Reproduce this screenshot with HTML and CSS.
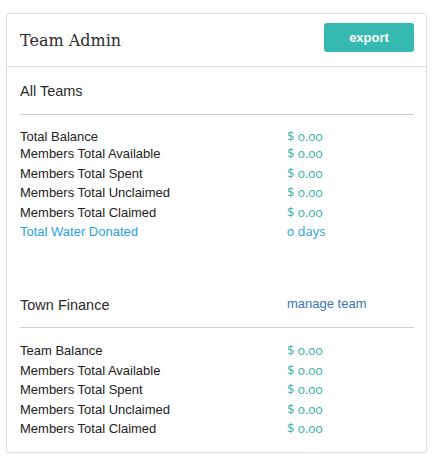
FILE: index.html
```html
<!DOCTYPE html>
<html>
<head>
<meta charset="utf-8">
<link rel="stylesheet" href="styles.css">
</head>
<body>
<div class="card">
  <div class="card-header">
    <h1 class="title">Team Admin</h1>
    <button class="btn-export">export</button>
  </div>
  <div class="card-body">
    <section class="team team-all">
      <div class="team-head">
        <span class="team-name">All Teams</span>
      </div>
      <div class="rows">
        <div class="row row-first"><span class="label">Total Balance</span><span class="value">$ 0.00</span></div>
        <div class="row"><span class="label">Members Total Available</span><span class="value">$ 0.00</span></div>
        <div class="row"><span class="label">Members Total Spent</span><span class="value">$ 0.00</span></div>
        <div class="row"><span class="label">Members Total Unclaimed</span><span class="value">$ 0.00</span></div>
        <div class="row"><span class="label">Members Total Claimed</span><span class="value">$ 0.00</span></div>
        <div class="row row-water"><span class="label">Total Water Donated</span><span class="value">0 days</span></div>
      </div>
    </section>
    <section class="team team-town">
      <div class="team-head">
        <span class="team-name">Town Finance</span>
        <a class="manage" href="#">manage team</a>
      </div>
      <div class="rows">
        <div class="row"><span class="label">Team Balance</span><span class="value">$ 0.00</span></div>
        <div class="row"><span class="label">Members Total Available</span><span class="value">$ 0.00</span></div>
        <div class="row"><span class="label">Members Total Spent</span><span class="value">$ 0.00</span></div>
        <div class="row"><span class="label">Members Total Unclaimed</span><span class="value">$ 0.00</span></div>
        <div class="row"><span class="label">Members Total Claimed</span><span class="value">$ 0.00</span></div>
      </div>
    </section>
  </div>
</div>
</body>
</html>
```
FILE: styles.css
```css
html, body {
  margin: 0;
  padding: 0;
  background: #fff;
}
body {
  font-family: "Liberation Sans", Arial, sans-serif;
  color: #222;
  padding: 13px 0 0 6px;
}
.card {
  width: 419px;
  border: 1px solid #dcdcdc;
  border-radius: 3px;
  box-shadow: 0 1px 2px rgba(0,0,0,0.08);
  background: #fff;
}
.card-header {
  height: 52px;
  border-bottom: 1px solid #dcdcdc;
  display: flex;
  align-items: flex-start;
  justify-content: space-between;
  padding: 0 12px 0 13px;
}
.title {
  margin: 17px 0 0;
  font-family: "DejaVu Serif", serif;
  font-weight: normal;
  font-size: 16px;
  line-height: 20px;
  color: #2b2b2b;
}
.btn-export {
  margin-top: 9px;
  width: 90px;
  height: 29px;
  border: none;
  border-radius: 3px;
  background: #35b9b1;
  color: #fff;
  font-family: "Liberation Sans", Arial, sans-serif;
  font-size: 13px;
  font-weight: bold;
  padding: 0;
}
.card-body {
  padding: 0 12px 13px 13px;
}
.team-head {
  display: grid;
  grid-template-columns: 267px 1fr;
  border-bottom: 1px solid #cfcfcf;
  line-height: 20px;
}
.team-all .team-head {
  padding: 14px 0 13px;
}
.team-town {
  margin-top: 53px;
}
.team-town .team-head {
  padding: 0 0 12px;
}
.team-name {
  font-size: 14.5px;
  color: #2a2a2a;
}
.manage {
  font-size: 13px;
  color: #3b76b0;
  text-decoration: none;
  line-height: 18px;
}
.rows {
  display: flex;
  flex-direction: column;
}
.team-all .rows {
  margin-top: 14px;
}
.team-town .rows {
  margin-top: 13px;
}
.row {
  display: grid;
  grid-template-columns: 267px 1fr;
  font-size: 13px;
  line-height: 19.6px;
}
.row-first {
  line-height: 15px;
}
.label {
  color: #222;
}
.value {
  font-family: "Open Sans", sans-serif;
  font-feature-settings: "onum" 1;
  font-size: 13px;
  color: #3bb3aa;
}
.row-water .label,
.row-water .value {
  color: #27a3e0;
}
```
